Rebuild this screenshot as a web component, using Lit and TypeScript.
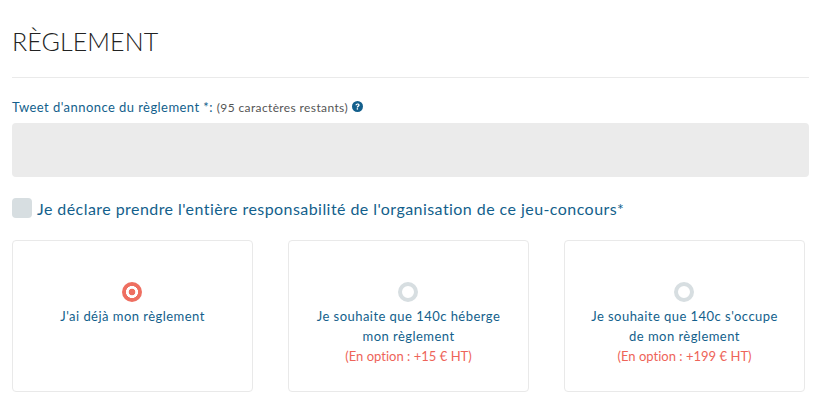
import { LitElement, html, css } from "lit";
import { customElement } from "lit/decorators.js";

interface Option {
  lines: string[];
  extra?: string;
  checked?: boolean;
}

const OPTIONS: Option[] = [
  { lines: ["J'ai déjà mon règlement"], checked: true },
  { lines: ["Je souhaite que 140c héberge", "mon règlement"], extra: "(En option : +15 € HT)" },
  { lines: ["Je souhaite que 140c s'occupe", "de mon règlement"], extra: "(En option : +199 € HT)" },
];

@customElement("app-root")
export class AppRoot extends LitElement {
  static styles = css`
    :host {
      display: block;
      width: 821px;
      height: 409px;
      box-sizing: border-box;
      padding: 0 12px;
      background: #fff;
      overflow: hidden;
      font-family: "Lato", "Open Sans", sans-serif;
      color: #135f8c;
    }
    .title {
      margin: 0;
      padding-top: 27px;
      height: 50px;
      box-sizing: content-box;
      font-size: 25px;
      line-height: 28px;
      font-weight: 300;
      letter-spacing: 0.1px;
      color: #222;
    }
    .rule {
      height: 1px;
      background: #eaeaea;
    }
    .label {
      display: flex;
      align-items: center;
      height: 16px;
      margin-top: 21px;
      font-size: 13px;
      letter-spacing: 0.44px;
      white-space: pre;
    }
    .muted {
      color: #555;
      font-size: 12px;
      letter-spacing: 0.38px;
    }
    .help {
      margin-left: 4px;
      margin-top: -1px;
      width: 11px;
      height: 11px;
      flex: none;
    }
    .area {
      width: 797px;
      height: 54px;
      margin-top: 8px;
      background: #ebebeb;
      border-radius: 4px;
    }
    .check {
      display: flex;
      align-items: center;
      gap: 5px;
      margin-top: 21px;
      height: 20px;
      font-size: 16px;
      letter-spacing: 0.44px;
      white-space: pre;
    }
    .box {
      width: 20px;
      height: 20px;
      border-radius: 4px;
      background: #d7dee1;
      flex: none;
    }
    .cards {
      display: grid;
      grid-template-columns: repeat(3, 241px);
      column-gap: 35px;
      margin-top: 22px;
    }
    .card {
      box-sizing: border-box;
      height: 152px;
      border: 1px solid #e9e9e9;
      border-radius: 4px;
      padding-top: 41px;
      display: flex;
      flex-direction: column;
      align-items: center;
      font-size: 13px;
      line-height: 20px;
      letter-spacing: 0.46px;
      text-align: center;
    }
    .radio {
      width: 20px;
      height: 20px;
      box-sizing: border-box;
      border-radius: 50%;
      border: 4px solid #d7dee1;
      background: #fff;
      margin-bottom: 4px;
      margin-right: 1px;
    }
    .radio.on {
      border: none;
      background: radial-gradient(circle, #ee6f61 0 3.2px, #fff 3.6px 5.8px, #ee6f61 6.2px);
    }
    .extra {
      color: #ee6459;
      letter-spacing: 0.02px;
    }
  `;

  render() {
    return html`
      <h1 class="title">RÈGLEMENT</h1>
      <div class="rule"></div>
      <div class="label">Tweet d'annonce du règlement *: <span class="muted">(95 caractères restants)</span>
        <svg class="help" viewBox="0 0 24 24" aria-hidden="true">
          <circle cx="12" cy="12" r="12" fill="#135f8c"></circle>
          <path d="M7.500 9.400c.2-2.700 2.100-4.200 4.700-4.200 2.500 0 4.500 1.400 4.500 3.700 0 1.800-1.100 2.600-2.300 3.400-1 .6-1.200 1-1.200 2h-2.800c-.1-1.900.5-2.800 1.800-3.700.9-.6 1.500-1 1.500-1.700 0-.8-.7-1.200-1.500-1.200-1.100 0-1.600.7-1.700 1.700z" fill="#fff"></path>
          <rect x="10.300" y="15.700" width="2.900" height="3" fill="#fff"></rect>
        </svg>
      </div>
      <div class="area"></div>
      <div class="check"><span class="box"></span><span>Je déclare prendre l'entière responsabilité de l'organisation de ce jeu-concours*</span></div>
      <div class="cards">
        ${OPTIONS.map(
          (o) => html`
            <div class="card">
              <span class="radio ${o.checked ? "on" : ""}"></span>
              ${o.lines.map((l) => html`<div>${l}</div>`)}
              ${o.extra ? html`<div class="extra">${o.extra}</div>` : ""}
            </div>
          `
        )}
      </div>
    `;
  }
}
